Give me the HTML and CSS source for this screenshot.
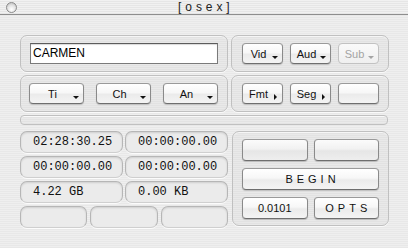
FILE: index.html
```html
<!DOCTYPE html>
<html lang="en">

<head>
    <meta charset="UTF-8" />
    <title>[osex]</title>
    <link rel="stylesheet" href="styles.css">
</head>

<body>
    <div class="window">
        <div class="titlebar">
            <span class="close"></span>
            <span class="title">[ o s e x ]</span>
        </div>

        <div class="content">
            <div class="top-grid">
                <div class="group name-box">
                    <div class="textfield">CARMEN</div>
                </div>
                <div class="group btn-row right-row">
                    <button class="btn pop">Vid<i class="arrow down"></i></button>
                    <button class="btn pop">Aud<i class="arrow down"></i></button>
                    <button class="btn pop disabled">Sub<i class="arrow down"></i></button>
                </div>
                <div class="group btn-row left-row">
                    <button class="btn pop wide">Ti<i class="arrow down"></i></button>
                    <button class="btn pop wide">Ch<i class="arrow down"></i></button>
                    <button class="btn pop wide">An<i class="arrow down"></i></button>
                </div>
                <div class="group btn-row right-row">
                    <button class="btn pop">Fmt<i class="arrow side"></i></button>
                    <button class="btn pop">Seg<i class="arrow side"></i></button>
                    <button class="btn"></button>
                </div>
            </div>

            <div class="separator"></div>

            <div class="bottom-grid">
                <div class="fields">
                    <div class="field">02:28:30.25</div>
                    <div class="field">00:00:00.00</div>
                    <div class="field">00:00:00.00</div>
                    <div class="field">00:00:00.00</div>
                    <div class="field">4.22 GB</div>
                    <div class="field">0.00 KB</div>
                    <div class="field-row">
                        <div class="field"></div>
                        <div class="field"></div>
                        <div class="field"></div>
                    </div>
                </div>

                <div class="group controls">
                    <button class="btn big blank"></button>
                    <button class="btn big blank"></button>
                    <button class="btn big spaced span2">BEGIN</button>
                    <button class="btn big">0.0101</button>
                    <button class="btn big spaced">OPTS</button>
                </div>
            </div>
        </div>
    </div>
</body>

</html>
```

FILE: styles.css
```css
:root {
    --stripe-a: #efefef;
    --stripe-b: #e8e8e8;
    --ui-font: "Liberation Sans", "DejaVu Sans", sans-serif;
    --mono-font: "Liberation Mono", "DejaVu Sans Mono", monospace;
}

html,
body {
    margin: 0;
    padding: 0;
}

body {
    width: 408px;
    height: 248px;
    overflow: hidden;
    font-family: var(--ui-font);
    color: #000;
}

.window {
    height: 248px;
    background: repeating-linear-gradient(to bottom, var(--stripe-a) 0, var(--stripe-a) 1px, var(--stripe-b) 1px, var(--stripe-b) 2px);
}

/* タイトルバー */
.titlebar {
    height: 14px;
    border-bottom: 1px solid #8e8e8e;
    display: flex;
    align-items: center;
    justify-content: center;
    position: relative;
    background: repeating-linear-gradient(to bottom, #f1f1f1 0, #f1f1f1 1px, #e6e6e6 1px, #e6e6e6 2px);
}

.close {
    position: absolute;
    left: 6px;
    top: 2px;
    width: 9px;
    height: 9px;
    border-radius: 50%;
    border: 1px solid #8a8a8a;
    background: radial-gradient(circle at 50% 70%, #ffffff 0, #e4e4e4 50%, #b4b4b4 100%);
}

.title {
    font-size: 12px;
    letter-spacing: 0.3px;
    color: #222;
    line-height: 14px;
}

.content {
    padding: 20px 20px 0 20px;
}

/* グループボックス */
.group {
    border: 1px solid #c0c0c0;
    border-radius: 7px;
    background: rgba(0, 0, 0, 0.025);
    box-shadow: inset 0 1px 0 rgba(255, 255, 255, 0.6), 0 1px 0 rgba(255, 255, 255, 0.7);
    box-sizing: border-box;
}

.top-grid {
    display: grid;
    grid-template-columns: 208px 158px;
    grid-auto-rows: 37px;
    gap: 3px;
}

.name-box {
    padding: 7px 9px;
}

.textfield {
    height: 21px;
    box-sizing: border-box;
    border: 1px solid #7a7a7a;
    border-top-color: #5c5c5c;
    background: #fff;
    box-shadow: inset 0 1px 1px rgba(0, 0, 0, 0.15);
    font-size: 12px;
    line-height: 18px;
    padding-left: 2px;
}

.btn-row {
    display: flex;
    align-items: center;
    justify-content: space-between;
}

.left-row {
    padding: 0 9px 0 8px;
}

.right-row {
    padding: 0 9px 0 10px;
}

/* アクアボタン */
.btn {
    height: 21px;
    width: 41px;
    padding: 0;
    margin: 0;
    border: 1px solid #8a8a8a;
    border-top-color: #9a9a9a;
    border-bottom-color: #6e6e6e;
    border-radius: 4px;
    background: linear-gradient(to bottom, #ffffff 0, #f7f7f7 45%, #ebebeb 55%, #f4f4f4 100%);
    box-shadow: 0 1px 1px rgba(0, 0, 0, 0.18);
    font-family: var(--ui-font);
    font-size: 11px;
    color: #111;
    position: relative;
    box-sizing: border-box;
}

.btn.pop {
    padding-right: 8px;
}

.btn.wide {
    width: 55px;
}

.btn.disabled {
    color: #a4a4a4;
    border-color: #c2c2c2;
    background: linear-gradient(to bottom, #fafafa, #efefef);
    box-shadow: none;
}

.arrow {
    position: absolute;
    width: 0;
    height: 0;
}

.arrow.down {
    right: 4px;
    bottom: 4px;
    border-left: 3px solid transparent;
    border-right: 3px solid transparent;
    border-top: 3px solid #111;
}

.disabled .arrow.down {
    border-top-color: #a4a4a4;
}

.arrow.side {
    right: 5px;
    bottom: 3px;
    border-top: 3px solid transparent;
    border-bottom: 3px solid transparent;
    border-left: 3px solid #111;
}

.separator {
    margin-top: 3px;
    height: 10px;
    box-sizing: border-box;
    border: 1px solid #c0c0c0;
    border-radius: 4px;
    background: rgba(0, 0, 0, 0.02);
    box-shadow: inset 0 1px 0 rgba(255, 255, 255, 0.7);
    width: 368px;
}

.bottom-grid {
    margin-top: 6px;
    display: grid;
    grid-template-columns: 208px 157px;
    gap: 4px;
    align-items: start;
}

/* 表示ウェル */
.fields {
    display: grid;
    grid-template-columns: 1fr 1fr;
    grid-auto-rows: 22px;
    gap: 3px 2px;
}

.field {
    border: 1px solid #b6b6b6;
    border-bottom-color: #cfcfcf;
    border-radius: 7px;
    background: #ebebeb;
    box-shadow: inset 0 1px 2px rgba(0, 0, 0, 0.12), 0 1px 0 rgba(255, 255, 255, 0.8);
    font-family: var(--mono-font);
    font-size: 12px;
    line-height: 20px;
    padding-left: 12px;
    color: #111;
    box-sizing: border-box;
}

.field-row {
    grid-column: span 2;
    display: grid;
    grid-template-columns: 1fr 1fr 1fr;
    gap: 3px;
}

.controls {
    height: 95px;
    padding: 7px 9px;
    display: grid;
    grid-template-columns: 1fr 1fr;
    grid-auto-rows: 22px;
    gap: 7px 6px;
}

.btn.big {
    width: auto;
    height: 22px;
}

.btn.blank {
    background: linear-gradient(to bottom, #fbfbfb 0, #f1f1f1 45%, #e6e6e6 55%, #eeeeee 100%);
}

.btn.spaced {
    letter-spacing: 4px;
    padding-left: 4px;
}

.span2 {
    grid-column: span 2;
}
```
